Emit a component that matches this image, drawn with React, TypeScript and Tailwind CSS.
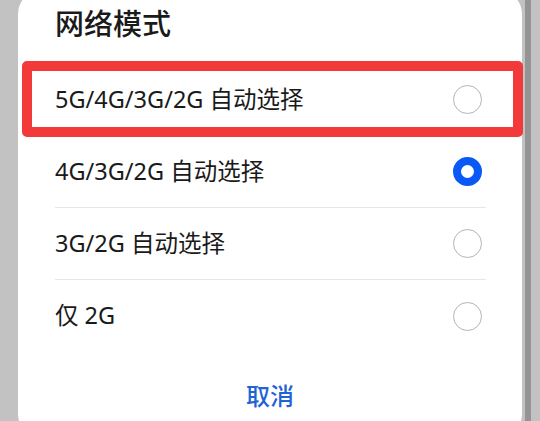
const options = [
  { label: '5G/4G/3G/2G 自动选择', checked: false },
  { label: '4G/3G/2G 自动选择', checked: true },
  { label: '3G/2G 自动选择', checked: false },
  { label: '仅 2G', checked: false },
]

function Radio({ checked }: { checked: boolean }) {
  if (checked) {
    return <div className="w-[29px] h-[29px] rounded-full border-[8px] border-[#0a59f7] bg-white" />
  }
  return <div className="w-[29px] h-[29px] rounded-full border-[1.5px] border-[#b4b4b4] bg-white" />
}

export default function App() {
  return (
    <div
      className="relative w-[540px] h-[421px] overflow-hidden bg-[#c2c2c2] flex"
      style={{ fontFamily: '"Noto Sans", "Noto Sans CJK SC", sans-serif' }}
    >
      {/* Dialog card */}
      <div className="ml-[18px] -mt-[10px] w-[504px] h-[448px] shrink-0 bg-white rounded-[24px] flex flex-col">
        <div className="pt-[16px] pl-[37px] h-[52px] mb-[22px] text-[29px] leading-[36px] font-medium text-[#1a1a1a]">
          网络模式
        </div>

        <div className="pl-[37px] pr-[36px] flex flex-col">
          {options.map((opt, i) => (
            <div
              key={opt.label}
              className={`h-[72px] flex items-center justify-between pr-[4px] ${
                i < options.length - 1 ? 'border-b border-[#e6e6e6]' : ''
              }`}
            >
              <span className="text-[23.5px] leading-none text-[#1a1a1a]">{opt.label}</span>
              <Radio checked={opt.checked} />
            </div>
          ))}
        </div>

        <div className="mt-[20px] h-[48px] flex items-center justify-center text-[24px] font-medium text-[#1f63d6]">
          取消
        </div>
      </div>

      {/* Scrollbar strip on the right */}
      <div className="w-[3px] shrink-0" />
      <div className="w-[6px] h-full shrink-0 bg-[#949494]" />

      {/* Red highlight annotation */}
      <div className="absolute left-[22px] top-[61px] w-[501px] h-[76px] border-[10px] border-[#f33a3a] rounded-[5px]" />
    </div>
  )
}
